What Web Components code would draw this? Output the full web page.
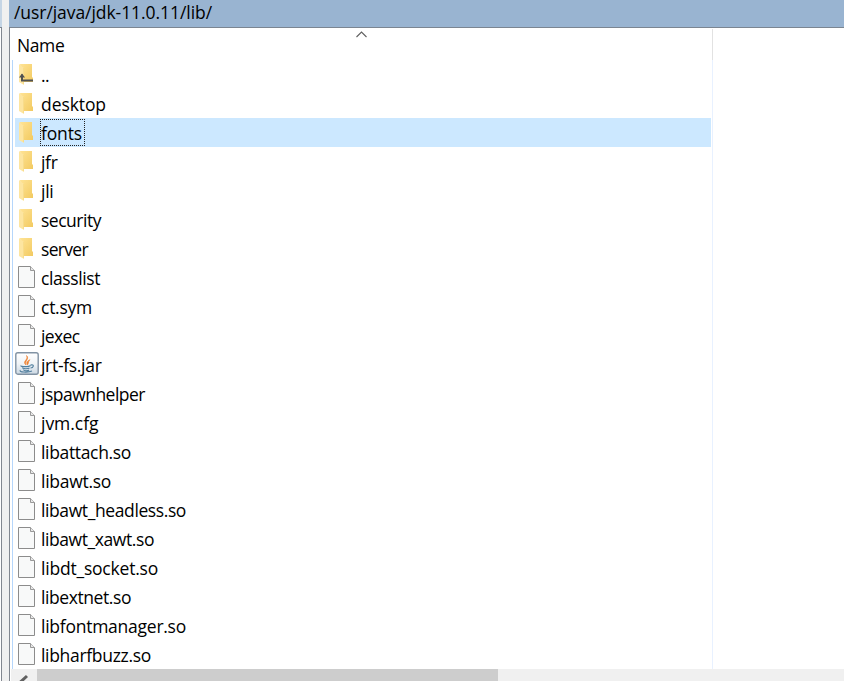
<!DOCTYPE html>
<html lang="en">
<head>
<meta charset="utf-8">
<title>/usr/java/jdk-11.0.11/lib/</title>
<style>
    body {
        margin: 0;
        overflow: hidden;
        background: #fff;
        color: #000;
        font-family: "Open Sans", "Noto Sans", sans-serif;
        font-size: 17.5px;
    }
</style>
</head>
<body>
<file-browser></file-browser>
<script>
const icons = {
    folder: `
        <defs><linearGradient id="f" x2="1" y2="1"><stop stop-color="#ffe394"/><stop offset="1" stop-color="#f2ca61"/></linearGradient></defs>
        <path d="M5 4H17V17L18 18V22H8Z" fill="url(#f)"/>
        <path d="M4 4L9 8V25L4 22Z" fill="#fde5a0"/>
        <path d="M8.500 8V24" stroke="#f6d985" stroke-width=".8"/>`,
    file: `
        <path d="M3.5 3.5H15.5L19.5 7.5V24.5H3.5Z" fill="#f8f9f9" stroke="#8c8c8c"/>
        <path d="M15.5 3.5V7.5H19.5" fill="#e8e8e8" stroke="#999"/>`,
    jar: `
        <defs><linearGradient id="g" x2="0" y2="1"><stop stop-color="#fff"/><stop offset=".5" stop-color="#f1f4f7"/><stop offset="1" stop-color="#cbd8e3"/></linearGradient></defs>
        <rect x=".8" y="2.8" width="22.4" height="21.4" rx="2" fill="url(#g)" stroke="#8192a3" stroke-width="1.4"/>
        <path d="M11 15C6.500 11 14 10 11.500 5.500C15 9 9 11 11 15M12.300 15C11 12.500 12 11 15 9.700C12.500 12 14.500 12.500 12.300 15" fill="#ef8130" stroke="#ef8130" stroke-width=".6"/>
        <path d="M6 15.500C5 17 14 17 15.500 15.500M7.500 17.500C7 19 13 19 14.500 18M8.500 19.500C8.500 21 13 21 14 20M15.500 15C20 14 18.500 18 15.500 18M5.500 20.300C3 22.200 13 22.800 17 21" fill="none" stroke="#527f9e" stroke-width="1.1"/>`
};
icons.up = icons.folder + `
        <path d="M7 14.500V20.500H18" fill="none" stroke="#505050" stroke-width="2"/>
        <path d="M4 17.500L7 13.500L10 17.500Z" fill="#505050"/>`;

// Spread the leftover width over the letters of a label
function fit(el, text, width) {
    const delta = width - el.getBoundingClientRect().width;
    el.style.letterSpacing = (delta / text.length) + 'px';
}

class PathBar extends HTMLElement {
    constructor() {
        super();
        this.attachShadow({ mode: 'open' }).innerHTML = `
            <style>
                :host {
                    display: block;
                    box-sizing: border-box;
                    height: 28px;
                    padding-left: 5px;
                    background: #99b4d1;
                    border-bottom: 1px solid #7b8591;
                    line-height: 25px;
                    white-space: nowrap;
                }
            </style>
            <span><slot></slot></span>`;
    }

    connectedCallback() {
        fit(this.shadowRoot.querySelector('span'), this.textContent, 198);
    }
}

class ColumnHeader extends HTMLElement {
    constructor() {
        super();
        this.attachShadow({ mode: 'open' }).innerHTML = `
            <style>
                :host {
                    display: grid;
                    grid-template-columns: 339px 1fr;
                    box-sizing: border-box;
                    width: 703px;
                    height: 32px;
                    padding-left: 7px;
                    line-height: 35px;
                    letter-spacing: -.4px;
                    background: linear-gradient(#e2e2e2, #e2e2e2) right 1px / 1px 31px no-repeat;
                }
                svg { display: block; margin-top: 2px; }
            </style>
            <span><slot></slot></span>
            <svg width="12" height="8" viewBox="0 0 12 8"><path d="M.5 7L5.500 2L10.500 7" fill="none" stroke="#606060" stroke-width="1.100"/></svg>`;
    }
}

class FileRow extends HTMLElement {
    connectedCallback() {
        const name = this.getAttribute('name');

        this.attachShadow({ mode: 'open' }).innerHTML = `
            <style>
                :host {
                    display: flex;
                    height: 29px;
                    width: 696px;
                }
                :host([selected]) { background: #cce8ff; }
                svg { flex: none; }
                .name {
                    box-sizing: border-box;
                    height: 27px;
                    margin: 1px 0 0 1px;
                    padding-right: 2px;
                    border: 1px solid transparent;
                    line-height: 26px;
                    white-space: pre;
                }
                :host([selected]) .name { border: 1px dotted #222; }
            </style>
            <svg width="24" height="29" viewBox="0 0 24 29">${icons[this.getAttribute('icon')]}</svg>
            <div class="name"><span>${name}</span></div>`;
        fit(this.shadowRoot.querySelector('span'), name, Number(this.getAttribute('fit')));
    }
}

class ScrollBar extends HTMLElement {
    constructor() {
        super();
        this.attachShadow({ mode: 'open' }).innerHTML = `
            <style>
                :host {
                    display: flex;
                    height: 12px;
                    margin-left: 1px;
                    background: #f0f0f0;
                    overflow: hidden;
                }
                svg { width: 26px; height: 18px; }
                .thumb { width: 461px; background: #cdcdcd; }
            </style>
            <svg viewBox="0 0 26 18"><path d="M16 7L10 12.500L16 18" fill="none" stroke="#606060" stroke-width="3"/></svg>
            <div class="thumb"></div>`;
    }
}

customElements.define('path-bar', PathBar);
customElements.define('column-header', ColumnHeader);
customElements.define('file-row', FileRow);
customElements.define('scroll-bar', ScrollBar);

const files = [
    ['up', '..', 8],
    ['folder', 'desktop', 65],
    ['folder', 'fonts', 41],
    ['folder', 'jfr', 16.5],
    ['folder', 'jli', 12.5],
    ['folder', 'security', 60],
    ['folder', 'server', 47],
    ['file', 'classlist', 59],
    ['file', 'ct.sym', 51],
    ['file', 'jexec', 38.5],
    ['jar', 'jrt-fs.jar', 60.5],
    ['file', 'jspawnhelper', 104],
    ['file', 'jvm.cfg', 57.5],
    ['file', 'libattach.so', 90],
    ['file', 'libawt.so', 70],
    ['file', 'libawt_headless.so', 145],
    ['file', 'libawt_xawt.so', 113],
    ['file', 'libdt_socket.so', 117],
    ['file', 'libextnet.so', 90],
    ['file', 'libfontmanager.so', 145],
    ['file', 'libharfbuzz.so', 110]
];

class FileBrowser extends HTMLElement {
    connectedCallback() {
        this.attachShadow({ mode: 'open' }).innerHTML = `
            <style>
                :host {
                    display: grid;
                    grid-template-columns: 2px 7px 1fr;
                    height: 681px;
                }
                .edge {
                    padding-top: 27px;
                    background: linear-gradient(#c5d5e5 27px, #fff 27px);
                }
                .pane {
                    height: 653px;
                    border-top: 1px solid #7b8591;
                    border-right: 1px solid #828790;
                }
                .splitter { background: #f0f0f0; }
                .content { border-left: 1px solid #828790; }
                main { min-width: 0; }
                .list {
                    box-sizing: border-box;
                    width: 701px;
                    height: 609px;
                    margin-left: 2px;
                    padding-left: 2px;
                    border-left: 1px solid #b5d6fb;
                    border-right: 1px solid #e8f1ff;
                }
            </style>
            <div class="edge"><div class="pane"></div></div>
            <div class="splitter"></div>
            <main>
                <path-bar>/usr/java/jdk-11.0.11/lib/</path-bar>
                <div class="content">
                    <column-header>Name</column-header>
                    <div class="list">
                        ${files.map(([icon, name, width]) => `<file-row icon="${icon}" name="${name}" fit="${width}" ${name === 'fonts' ? 'selected' : ''}></file-row>`).join('')}
                    </div>
                    <scroll-bar></scroll-bar>
                </div>
            </main>`;
    }
}

customElements.define('file-browser', FileBrowser);
</script>
</body>
</html>
